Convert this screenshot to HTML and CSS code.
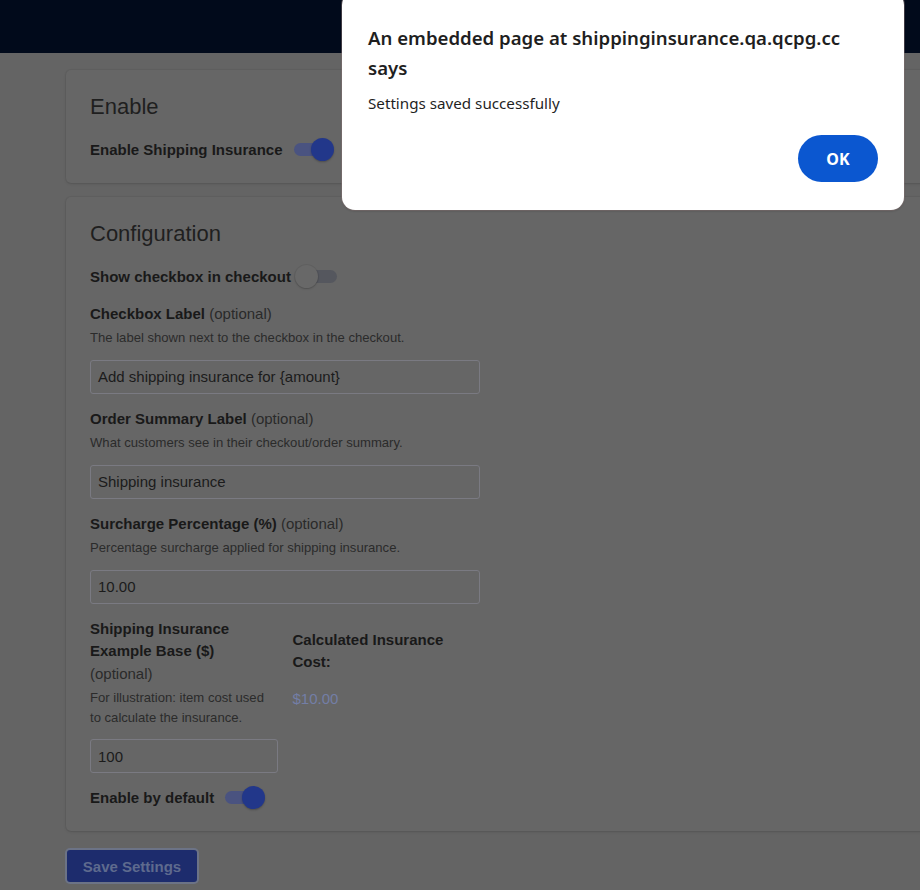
FILE: index.html
```html
<!DOCTYPE html>
<html lang="en">
<head>
<meta charset="utf-8">
<title>Shipping Insurance Settings</title>
<link rel="stylesheet" href="styles.css">
</head>
<body>
<header class="topbar"></header>
<main class="page">
  <section class="card">
    <h2 class="card-title">Enable</h2>
    <div class="toggle-row">
      <span class="toggle-label">Enable Shipping Insurance</span>
      <span class="switch on"><span class="thumb"></span></span>
    </div>
  </section>

  <section class="card">
    <h2 class="card-title">Configuration</h2>
    <div class="toggle-row">
      <span class="toggle-label">Show checkbox in checkout</span>
      <span class="switch off"><span class="thumb"></span></span>
    </div>

    <div class="field">
      <label class="label">Checkbox Label <span class="opt">(optional)</span></label>
      <p class="desc">The label shown next to the checkbox in the checkout.</p>
      <div class="input">Add shipping insurance for {amount}</div>
    </div>

    <div class="field">
      <label class="label">Order Summary Label <span class="opt">(optional)</span></label>
      <p class="desc">What customers see in their checkout/order summary.</p>
      <div class="input">Shipping insurance</div>
    </div>

    <div class="field">
      <label class="label">Surcharge Percentage (%) <span class="opt">(optional)</span></label>
      <p class="desc">Percentage surcharge applied for shipping insurance.</p>
      <div class="input">10.00</div>
    </div>

    <div class="two-col">
      <div class="field">
        <label class="label">Shipping Insurance Example Base ($) <span class="opt">(optional)</span></label>
        <p class="desc">For illustration: item cost used to calculate the insurance.</p>
        <div class="input">100</div>
      </div>
      <div class="calc">
        <div class="label calc-label">Calculated Insurance Cost:</div>
        <div class="calc-value">$10.00</div>
      </div>
    </div>

    <div class="toggle-row last">
      <span class="toggle-label">Enable by default</span>
      <span class="switch on"><span class="thumb"></span></span>
    </div>
  </section>

  <button class="save">Save Settings</button>
</main>

<div class="dialog" role="alertdialog">
  <div class="dlg-title">An embedded page at shippinginsurance.qa.qcpg.cc says</div>
  <div class="dlg-msg">Settings saved successfully</div>
  <button class="dlg-ok">OK</button>
</div>
</body>
</html>
```

FILE: styles.css
```css
* { box-sizing: border-box; }

html, body {
  margin: 0;
  padding: 0;
  height: 100%;
}

body {
  background: #646464;
  font-family: "Liberation Sans", Arial, sans-serif;
  color: #1c1c1c;
  overflow: hidden;
  position: relative;
}

.topbar {
  height: 53px;
  background: #010a1b;
}

.page {
  padding: 17px 0 0 66px;
  display: flex;
  flex-direction: column;
  align-items: flex-start;
  gap: 14px;
}

.card {
  align-self: stretch;
  margin-right: -20px;
  background: #666666;
  border-radius: 5px;
  box-shadow: 0 0 0 1px rgba(0, 0, 0, 0.035), 0 1px 3px rgba(0, 0, 0, 0.12);
  padding: 24px 24px 22px 24px;
  display: flex;
  flex-direction: column;
  gap: 14px;
}

.card-title {
  margin: 0 0 3px 0;
  font-size: 22px;
  line-height: 26.4px;
  font-weight: 400;
  color: #1f1f1f;
}

.toggle-row {
  height: 24px;
  display: flex;
  align-items: center;
}

.toggle-row.last { margin-top: -2px; }

.toggle-label {
  font-size: 15px;
  font-weight: 700;
  color: #191919;
}

.switch {
  position: relative;
  width: 37px;
  height: 13px;
  margin-left: 11px;
  border-radius: 7px;
}

.switch.on { background: #4a5380; }
.switch.off { background: #55575e; margin-left: 9px; }

.thumb {
  position: absolute;
  top: -5px;
  width: 23px;
  height: 23px;
  border-radius: 50%;
}

.switch.on .thumb {
  left: 17px;
  background: #22378a;
  box-shadow: 0 1px 2px rgba(0, 0, 0, 0.25);
}

.switch.off .thumb {
  left: -5px;
  background: #686868;
  box-shadow: 0 0 0 1px rgba(0, 0, 0, 0.05), 0 1px 2px rgba(0, 0, 0, 0.18);
}

.field {
  width: 390px;
  display: flex;
  flex-direction: column;
}

.label {
  display: block;
  font-size: 15px;
  line-height: 22.5px;
  font-weight: 700;
  color: #191919;
}

.opt {
  font-weight: 400;
  color: #2a2a2a;
}

.desc {
  margin: 3px 0 12px 0;
  font-size: 13.1px;
  line-height: 19.5px;
  color: #2b2b2b;
}

.input {
  height: 34px;
  border: 1px solid #7a7a82;
  border-radius: 3px;
  padding: 0 7px;
  display: flex;
  align-items: center;
  font-size: 15px;
  color: #1b1b1b;
  background: #666666;
}

.two-col {
  width: 390px;
  display: grid;
  grid-template-columns: 1fr 1fr;
  column-gap: 15px;
}

.two-col .field { width: auto; }

.calc-label { margin-top: 11px; }

.calc-value {
  margin-top: 14px;
  font-size: 15px;
  line-height: 22.5px;
  color: #737ea6;
}

.save {
  margin: 5px 0 0 1px;
  width: 130px;
  height: 32px;
  border: none;
  border-radius: 3px;
  background: #1d2c6d;
  color: #5e6a8e;
  font-family: "Liberation Sans", Arial, sans-serif;
  font-size: 15px;
  font-weight: 700;
  box-shadow: 0 0 0 2px #6c7386;
  padding: 0;
}

.dialog {
  position: absolute;
  left: 342px;
  top: -8px;
  width: 562px;
  height: 218px;
  background: #ffffff;
  border-radius: 13px;
  box-shadow: 0 0 0 1px rgba(140, 120, 120, 0.45), 0 1px 2px rgba(0, 0, 0, 0.25);
  padding: 31px 26px 26px 26px;
  display: flex;
  flex-direction: column;
  font-family: "Noto Sans", "Open Sans", sans-serif;
  color: #1f1f1f;
}

.dlg-title {
  font-size: 18.6px;
  line-height: 30px;
  font-weight: 600;
}

.dlg-msg {
  margin-top: 10px;
  font-size: 15.2px;
  line-height: 20px;
}

.dlg-ok {
  margin-top: 22px;
  align-self: flex-end;
  width: 80px;
  height: 47px;
  border: none;
  border-radius: 24px;
  background: #0b57d0;
  color: #ffffff;
  font-family: "Noto Sans", "Open Sans", sans-serif;
  font-size: 16px;
  font-weight: 700;
  padding: 0;
}
```
